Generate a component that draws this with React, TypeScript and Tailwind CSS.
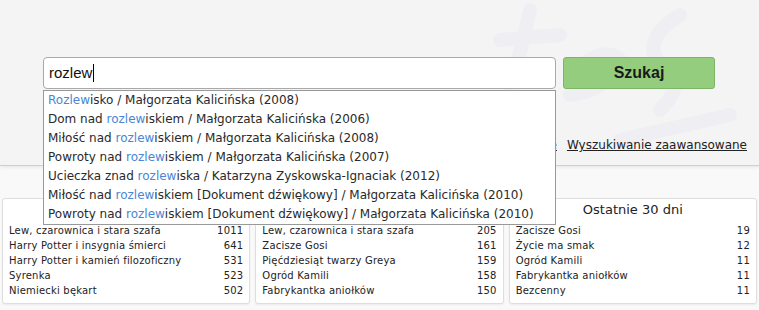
import React from "react";

interface Suggestion {
  before: string;
  match: string;
  after: string;
}

interface Row {
  title: string;
  count: number;
}

const suggestions: Suggestion[] = [
  { before: "", match: "Rozlew", after: "isko / Małgorzata Kalicińska (2008)" },
  { before: "Dom nad ", match: "rozlew", after: "iskiem / Małgorzata Kalicińska (2006)" },
  { before: "Miłość nad ", match: "rozlew", after: "iskiem / Małgorzata Kalicińska (2008)" },
  { before: "Powroty nad ", match: "rozlew", after: "iskiem / Małgorzata Kalicińska (2007)" },
  { before: "Ucieczka znad ", match: "rozlew", after: "iska / Katarzyna Zyskowska-Ignaciak (2012)" },
  { before: "Miłość nad ", match: "rozlew", after: "iskiem [Dokument dźwiękowy] / Małgorzata Kalicińska (2010)" },
  { before: "Powroty nad ", match: "rozlew", after: "iskiem [Dokument dźwiękowy] / Małgorzata Kalicińska (2010)" },
];

const panels: { title: string; rows: Row[] }[] = [
  {
    title: "Wszystkie",
    rows: [
      { title: "Lew, czarownica i stara szafa", count: 1011 },
      { title: "Harry Potter i insygnia śmierci", count: 641 },
      { title: "Harry Potter i kamień filozoficzny", count: 531 },
      { title: "Syrenka", count: 523 },
      { title: "Niemiecki bękart", count: 502 },
    ],
  },
  {
    title: "Ostatni rok",
    rows: [
      { title: "Lew, czarownica i stara szafa", count: 205 },
      { title: "Zacisze Gosi", count: 161 },
      { title: "Pięćdziesiąt twarzy Greya", count: 159 },
      { title: "Ogród Kamili", count: 158 },
      { title: "Fabrykantka aniołków", count: 150 },
    ],
  },
  {
    title: "Ostatnie 30 dni",
    rows: [
      { title: "Zacisze Gosi", count: 19 },
      { title: "Życie ma smak", count: 12 },
      { title: "Ogród Kamili", count: 11 },
      { title: "Fabrykantka aniołków", count: 11 },
      { title: "Bezcenny", count: 11 },
    ],
  },
];

const App: React.FC = () => {
  return (
    <div className="w-[759px] h-[310px] overflow-hidden bg-[#f9f9f9] font-['DejaVu_Sans',sans-serif] text-[#222]">
      {/* top search area */}
      <div className="relative h-[166px] bg-[#f4f4f4] border-b border-[#cfcfcf] shadow-[0_2px_3px_rgba(0,0,0,0.06)]">
        {/* faint watermark logo */}
        <svg className="absolute left-[390px] top-0" width="369" height="166" viewBox="0 0 369 166" fill="none">
          <g stroke="#efeff3" strokeWidth="14" strokeLinecap="round">
            <path d="M140 10 L120 95" />
            <path d="M110 40 L170 35" />
            <path d="M185 70 Q215 45 230 60 Q220 90 180 95" />
            <path d="M290 15 Q250 40 270 65 Q300 80 270 110" />
            <path d="M230 140 L340 115" />
          </g>
        </svg>

        <div className="relative flex pt-[57px] pl-[43px] gap-[7px]">
          <div className="relative w-[513px]">
            <div className="h-[32px] bg-white border border-[#a9a9a9] rounded-[4px] flex items-center pl-[5px] font-['Liberation_Sans',sans-serif] text-[15px] text-[#111]">
              rozlew
              <span className="inline-block w-px h-[18px] bg-black ml-px" />
            </div>
            <ul className="absolute left-0 top-[33px] w-[513px] bg-white border border-[#999] z-10 text-[12px] leading-[19px] text-[#2a2a2a]">
              {suggestions.map((s, i) => (
                <li key={i} className="px-[4px] whitespace-nowrap">
                  {s.before}
                  <span className="text-[#4a86d4]">{s.match}</span>
                  {s.after}
                </li>
              ))}
            </ul>
          </div>
          <button className="w-[152px] h-[32px] bg-[#95cd7e] border border-[#7db566] rounded-[3px] font-['Liberation_Sans',sans-serif] font-bold text-[16px] text-[#1a1a1a]">
            Szukaj
          </button>
        </div>

        <div className="relative flex justify-end items-center gap-[10px] pr-[12px] mt-[47px] text-[12px] text-[#222]">
          <a className="underline">Wyszukiwanie proste</a>
          <a className="underline">Wyszukiwanie zaawansowane</a>
        </div>
      </div>

      {/* popular lists */}
      <div className="grid grid-cols-3 gap-[5px] px-[2px] pt-[32px]">
        {panels.map((p) => (
          <div key={p.title} className="bg-white border border-[#dedede] rounded-[3px] shadow-[0_1px_2px_rgba(0,0,0,0.06)] h-[106px]">
            <div className="text-center text-[13px] leading-[22px] text-[#222]">{p.title}</div>
            <div className="pl-[6px] pr-[6px] pt-[2px] text-[10px] leading-[15px] tracking-[0.2px] text-[#222]">
              {p.rows.map((r) => (
                <div key={r.title} className="flex justify-between">
                  <span>{r.title}</span>
                  <span>{r.count}</span>
                </div>
              ))}
            </div>
          </div>
        ))}
      </div>
    </div>
  );
};

export default App;
